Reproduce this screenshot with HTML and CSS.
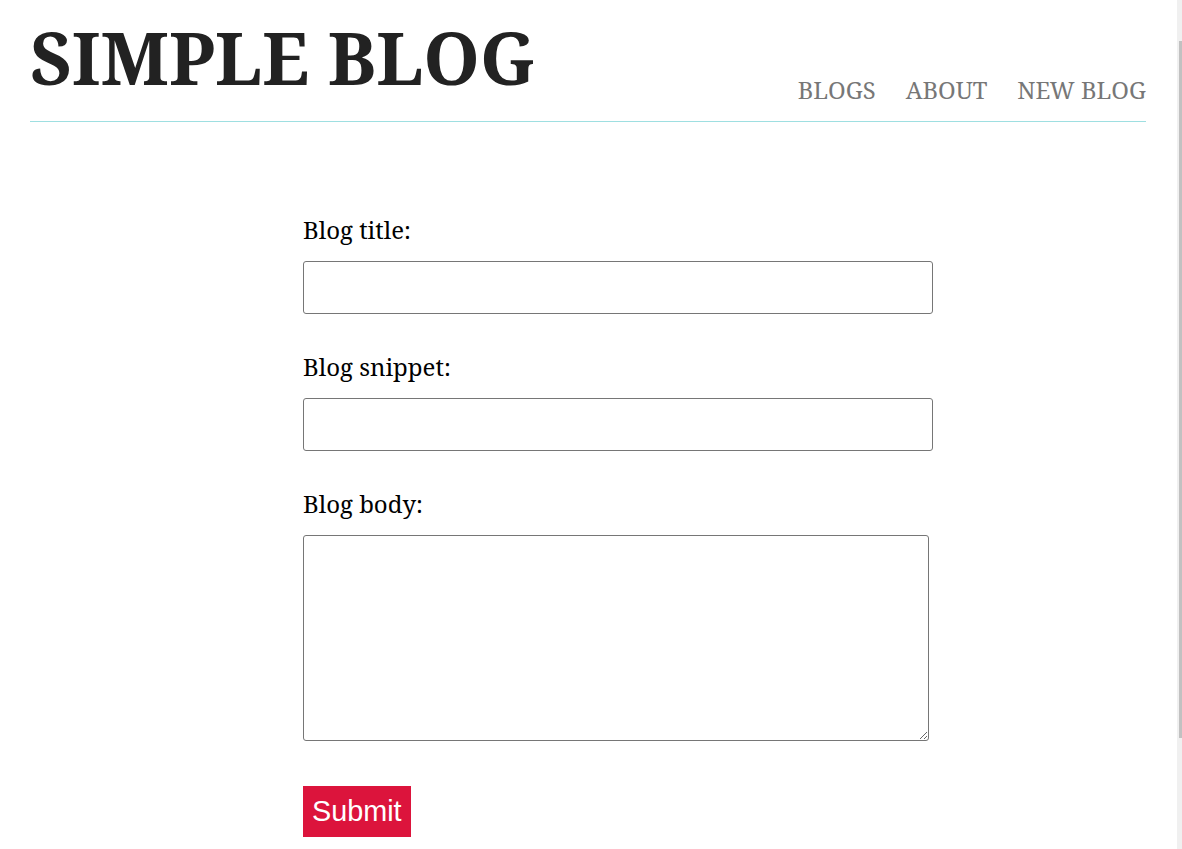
FILE: index.html
```html
<!DOCTYPE html>
<html lang="en">
<head>
<meta charset="utf-8">
<title>Simple Blog</title>
<link rel="stylesheet" href="styles.css">
</head>
<body>
<div class="page">
  <header class="site-header">
    <h1 class="logo">SIMPLE BLOG</h1>
    <nav class="nav">
      <a href="#" class="nav-link">BLOGS</a>
      <a href="#" class="nav-link">ABOUT</a>
      <a href="#" class="nav-link">NEW BLOG</a>
    </nav>
  </header>
  <main class="content">
    <form class="blog-form">
      <label class="field-label" for="title">Blog title:</label>
      <input class="field-input" type="text" id="title" name="title">
      <label class="field-label" for="snippet">Blog snippet:</label>
      <input class="field-input" type="text" id="snippet" name="snippet">
      <label class="field-label" for="body">Blog body:</label>
      <textarea class="field-textarea" id="body" name="body"></textarea>
      <button class="submit-btn" type="submit">Submit</button>
    </form>
  </main>
</div>
<div class="scrollbar" aria-hidden="true"><div class="scrollbar-thumb"></div></div>
</body>
</html>
```
FILE: styles.css
```css
html, body {
  overflow: hidden;
}

body {
  margin: 0;
  font-family: "Noto Serif", "DejaVu Serif", serif;
  color: #000;
  background: #fff;
}

.page {
  padding: 0 36px 0 30px;
}

.site-header {
  display: flex;
  justify-content: space-between;
  align-items: flex-end;
  border-bottom: 1px solid #9edfe1;
  padding: 14px 0 17px;
}

.logo {
  margin: 0 0 4px;
  font-size: 72px;
  line-height: 1.2;
  font-weight: 700;
  color: #222;
}

.nav {
  display: flex;
  gap: 30px;
}

.nav-link {
  font-size: 23.8px;
  color: #777;
  text-decoration: none;
  line-height: 1.2;
}

.content {
  padding: 91px 0 0 60px;
}

.blog-form {
  width: 630px;
  margin: 0 auto;
  display: flex;
  flex-direction: column;
  align-items: flex-start;
}

.field-label {
  font-size: 24px;
  line-height: 1.4;
  margin-bottom: 14px;
}

.field-input {
  box-sizing: border-box;
  width: 630px;
  height: 53px;
  border: 1px solid #767676;
  border-radius: 3px;
  margin: 0 0 36px;
  padding: 6px 10px;
  font-size: 18px;
}

.field-textarea {
  box-sizing: border-box;
  width: 626px;
  height: 206px;
  border: 1px solid #767676;
  border-radius: 3px;
  margin: 1px 0 45px;
  padding: 6px 10px;
  font-size: 18px;
}

.submit-btn {
  background: #dc143c;
  color: #fff;
  border: none;
  font-family: "Liberation Sans", Arial, sans-serif;
  font-size: 28.8px;
  padding: 9px 9px;
  line-height: 1.15;
  cursor: pointer;
}

.scrollbar {
  position: fixed;
  top: 0;
  right: 0;
  width: 5px;
  height: 100vh;
  background: #f0f0f0;
}

.scrollbar-thumb {
  position: absolute;
  top: 41px;
  left: 2px;
  right: 0;
  height: 697px;
  background: #c1c1c1;
}
```
